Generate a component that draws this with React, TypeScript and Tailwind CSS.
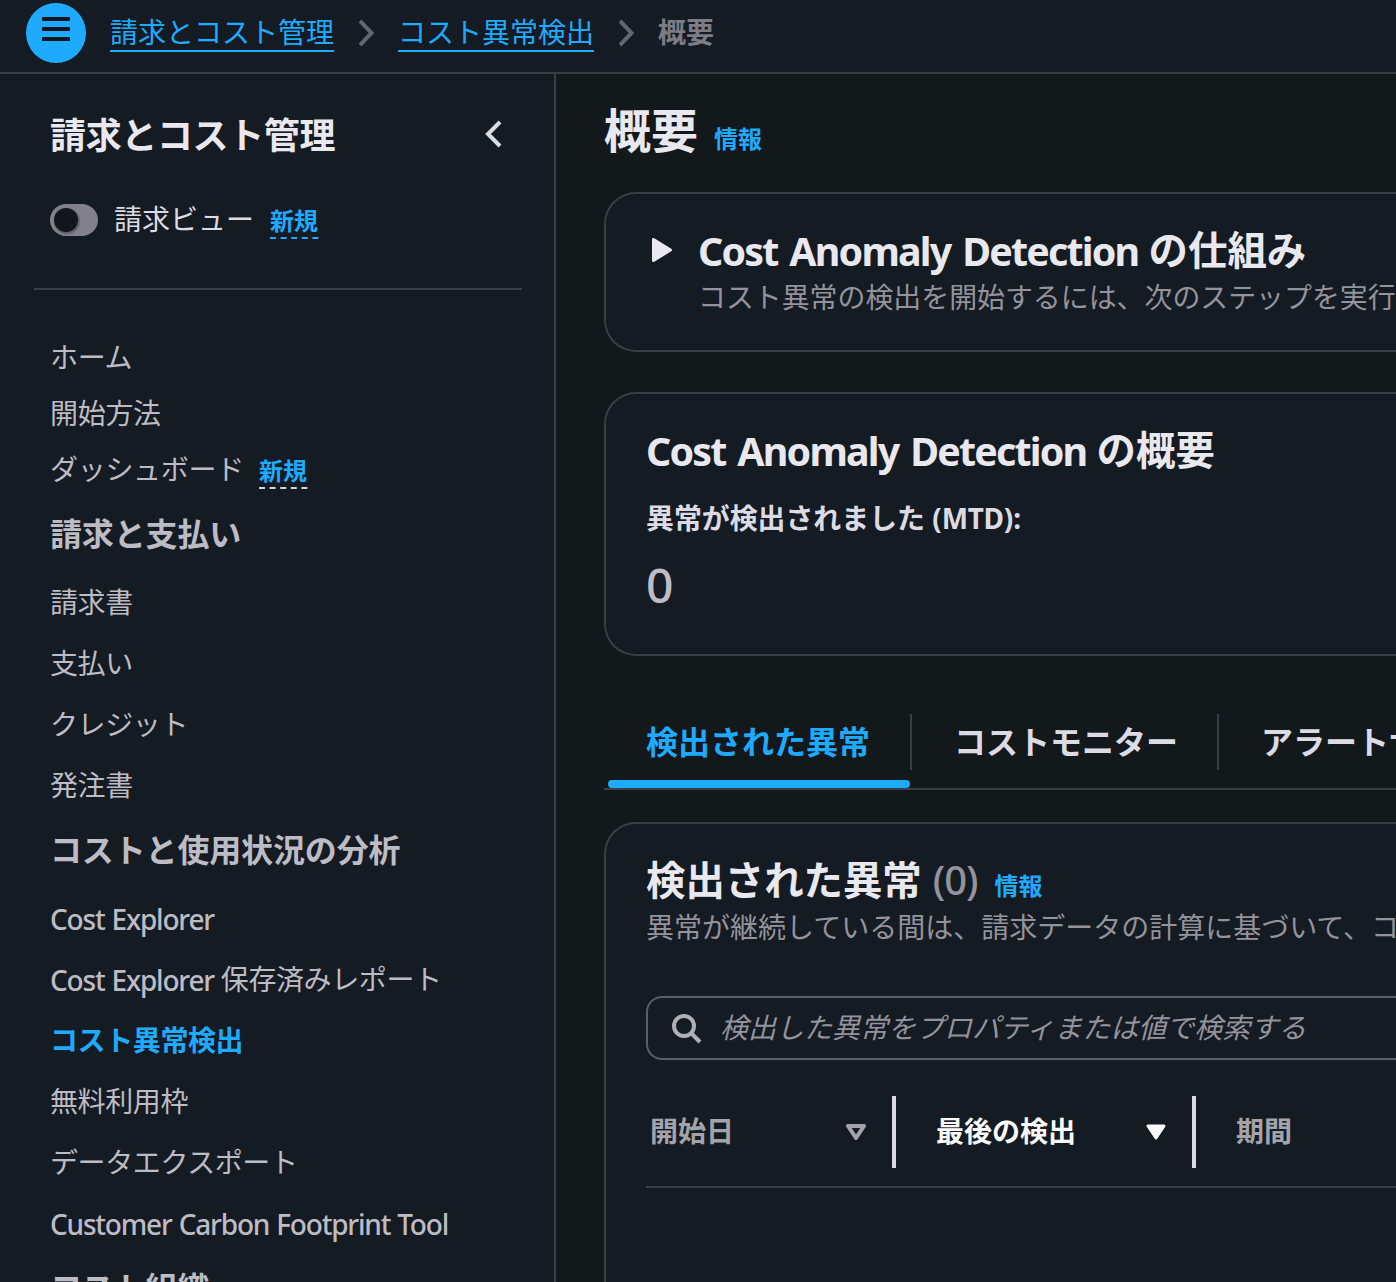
import type { ReactNode } from 'react';

interface NavItem {
  label: string;
  isNew?: boolean;
  active?: boolean;
}

interface NavSection {
  title: string;
  headingClass: string;
  items: NavItem[];
}

const topLinks: NavItem[] = [
  { label: 'ホーム' },
  { label: '開始方法' },
  { label: 'ダッシュボード', isNew: true },
];

const sections: NavSection[] = [
  {
    title: '請求と支払い',
    headingClass: 'h-[75px] pb-0.5',
    items: [{ label: '請求書' }, { label: '支払い' }, { label: 'クレジット' }, { label: '発注書' }],
  },
  {
    title: 'コストと使用状況の分析',
    headingClass: 'h-[72px] pb-1',
    items: [
      { label: 'Cost Explorer' },
      { label: 'Cost Explorer 保存済みレポート' },
      { label: 'コスト異常検出', active: true },
      { label: '無料利用枠' },
      { label: 'データエクスポート' },
      { label: 'Customer Carbon Footprint Tool' },
    ],
  },
  { title: 'コスト組織', headingClass: 'h-[72px] pb-1', items: [] },
];

// Latin runs are set tighter than the Japanese text around them
function Label({ text, latin }: { text: string; latin: string }) {
  return (
    <>
      {text.split(/([A-Za-z][A-Za-z ]*[A-Za-z])/).map((part, i) =>
        i % 2 ? (
          <span key={i} className={latin}>
            {part}
          </span>
        ) : (
          part
        )
      )}
    </>
  );
}

function NewBadge({ lineColor }: { lineColor: string }) {
  return (
    <span className="flex flex-col gap-0.5">
      <span className="text-2xl leading-[28px] font-bold tracking-normal text-[#1eabff]">新規</span>
      <svg className="h-0.5 w-[49px]" viewBox="0 0 49 2">
        <path d="M0 1h48.500" stroke={lineColor} strokeWidth="2" strokeDasharray="6 4.6" />
      </svg>
    </span>
  );
}

function Crumb({ children }: { children: ReactNode }) {
  return (
    <a className="h-[38px] border-b-2 border-[#1eabff] text-[28px] leading-[36px] text-[#1eabff]">{children}</a>
  );
}

function CrumbArrow() {
  return (
    <svg className="mt-[3px] mr-[23px] ml-[25px] h-8 w-4 shrink-0" viewBox="0 0 16 32" fill="none">
      <path d="M1 4l11.500 12L1 28" stroke="#65656e" strokeWidth="4" />
    </svg>
  );
}

function TopBar() {
  return (
    <header className="flex h-[74px] shrink-0 border-b-2 border-[#3a3e46] bg-[#151b23]">
      <button className="mt-[3px] ml-[26px] flex h-[60px] w-[60px] shrink-0 justify-center rounded-full bg-[#1eabff] pt-3.5">
        <svg className="h-6 w-7" viewBox="0 0 28 24">
          <path d="M0 2h28M0 12h28M0 22h28" stroke="#12171f" strokeWidth="4" />
        </svg>
      </button>
      <nav className="mt-3.5 ml-6 flex items-start whitespace-nowrap">
        <Crumb>請求とコスト管理</Crumb>
        <CrumbArrow />
        <Crumb>コスト異常検出</Crumb>
        <CrumbArrow />
        <span className="text-[28px] leading-[36px] font-bold text-[#7c7c86]">概要</span>
      </nav>
    </header>
  );
}

function Sidebar() {
  return (
    <aside className="w-[556px] shrink-0 border-r-2 border-[#3a3e46] bg-[#151b23]">
      <div className="flex items-center justify-between pt-8 pr-[52px] pl-[50px]">
        <h2 className="pt-1 text-[36px] leading-[52px] font-bold tracking-[-0.36px] text-[#e9e8ef]">
          請求とコスト管理
        </h2>
        <svg className="h-7 w-[18px]" viewBox="0 0 18 28" fill="none">
          <path d="M16 2L4 14l12 12" stroke="#dcdbe3" strokeWidth="4" />
        </svg>
      </div>

      <div className="mt-8 flex h-[52px] items-center pl-[50px]">
        <span className="flex h-8 w-12 items-center rounded-full bg-[#82818b] p-1">
          <span className="h-6 w-6 rounded-full bg-[#12161b] shadow-[1px_1px_1px_1px_rgba(0,0,0,0.25)]" />
        </span>
        <span className="mr-4 ml-4 pb-0.5 text-[28px] leading-[40px] text-[#dcdbe3]">請求ビュー</span>
        <span className="pt-[5px]">
          <NewBadge lineColor="#1eabff" />
        </span>
      </div>

      <div className="mt-[42px] mr-8 ml-[34px] border-t-2 border-[#3a3e46]" />

      <ul className="mt-[39px] pl-[50px] text-[28px] tracking-[-0.3px] text-[#bdbcc5]">
        {topLinks.map((item) => (
          <li key={item.label} className="flex h-14 items-center leading-[40px]">
            {item.label}
            {item.isNew && (
              <span className="ml-[15px] pt-2">
                <NewBadge lineColor="#d5d4dc" />
              </span>
            )}
          </li>
        ))}
      </ul>

      {sections.map((section) => (
        <div key={section.title} className="pl-[50px] text-[#bdbcc5]">
          <h3 className={`flex items-center text-[32px] leading-[40px] font-bold tracking-[-0.15px] ${section.headingClass}`}>
            {section.title}
          </h3>
          <ul className="text-[28px] tracking-[-0.4px]">
            {section.items.map((item) => (
              <li
                key={item.label}
                className={
                  item.active
                    ? 'h-[61px] leading-[61px] font-bold text-[#1eabff]'
                    : 'h-[61px] leading-[61px] whitespace-pre'
                }
              >
                <Label text={item.label} latin="relative top-px font-medium tracking-[-1.2px] [word-spacing:1px]" />
              </li>
            ))}
          </ul>
        </div>
      ))}
    </aside>
  );
}

function SortIcon({ filled }: { filled?: boolean }) {
  return (
    <svg className="h-4 w-5" viewBox="0 0 20 16">
      <path
        d="M2 2h16l-8 12z"
        fill={filled ? '#fafafa' : 'none'}
        stroke={filled ? '#fafafa' : '#a4a3aa'}
        strokeWidth={filled ? 3 : 4}
        strokeLinejoin="round"
      />
    </svg>
  );
}

function HowItWorks() {
  return (
    <section className="mt-9 flex h-40 rounded-l-[32px] border-2 border-r-0 border-[#3a3e46] bg-[#151b23] pl-[46px]">
      <svg className="mt-11 h-6 w-5 shrink-0" viewBox="0 0 20 24">
        <path d="M1.500 1.500v21L18.500 12z" fill="#e9e8ef" stroke="#e9e8ef" strokeWidth="3" strokeLinejoin="round" />
      </svg>
      <div className="mt-8 ml-[26px]">
        <h2 className="text-[39.400px] leading-[48px] font-bold text-[#e9e8ef]">
          <Label text="Cost Anomaly Detection の仕組み" latin="relative top-px tracking-[-1.8px] [word-spacing:3.300px]" />
        </h2>
        <p className="text-[27.920px] leading-[46px] text-[#94939b]">
          コスト異常の検出を開始するには、次のステップを実行してください
        </p>
      </div>
    </section>
  );
}

function Summary() {
  return (
    <section className="mt-10 h-[264px] rounded-l-[32px] border-2 border-r-0 border-[#3a3e46] bg-[#151b23] pt-8 pl-10">
      <h2 className="text-[39.400px] leading-[48px] font-bold text-[#e9e8ef]">
        <Label text="Cost Anomaly Detection の概要" latin="relative top-px tracking-[-1.8px] [word-spacing:3.300px]" />
      </h2>
      <div className="mt-6 text-[27.900px] leading-[40px] font-bold text-[#dcdbe3]">
        <Label text="異常が検出されました (MTD):" latin="tracking-[-0.2px]" />
      </div>
      <div className="mt-[17px] text-5xl leading-[60px] font-medium text-[#bdbcc5]">0</div>
    </section>
  );
}

function Tabs() {
  return (
    <div className="mt-[58px] flex h-[76px] border-b-2 border-[#3a3e46] text-[32px] leading-[56px] font-bold text-[#dcdbe3]">
      <div className="flex w-[308px] shrink-0 flex-col">
        <div className="h-14 border-r-2 border-[#3a3e46] pl-[42px] text-[#1eabff]">検出された異常</div>
        <div className="mt-2.5 mr-[2px] ml-1 h-2 rounded bg-[#1eabff]" />
      </div>
      <div className="h-14 w-[307px] shrink-0 border-r-2 border-[#3a3e46] pl-[42px]">コストモニター</div>
      <div className="shrink-0 pl-[42px]">アラートサブスクリプション</div>
    </div>
  );
}

function AnomalyTable() {
  return (
    <section className="mt-8 flex-1 rounded-tl-[32px] border-t-2 border-l-2 border-[#3a3e46] bg-[#151b23] pt-8 pl-10">
      <div className="flex h-12 items-baseline">
        <h2 className="text-[39.400px] leading-[48px] font-bold text-[#e9e8ef]">検出された異常</h2>
        <span className="ml-[11px] text-[40px] leading-[48px] font-medium tracking-[-1px] text-[#94939b]">(0)</span>
        <a className="ml-[17px] text-2xl leading-[30px] font-bold text-[#1eabff]">情報</a>
      </div>
      <p className="text-[28px] leading-[46px] text-[#94939b]">
        異常が継続している間は、請求データの計算に基づいて、コストへの影響が更新されます
      </p>

      <div className="mt-[46px] flex h-16 items-center rounded-l-2xl border-2 border-r-0 border-[#5c5c65] pl-6">
        <svg className="mt-0.5 h-[30px] w-[30px] shrink-0" viewBox="0 0 30 30" fill="none" stroke="#b0afb6" strokeWidth="4">
          <circle cx="12" cy="12" r="10" />
          <path d="M19 19l9 9" />
        </svg>
        <span className="ml-[18px] pb-0.5 text-[28px] text-[#94939b] italic">
          検出した異常をプロパティまたは値で検索する
        </span>
      </div>

      <div className="mt-9 flex h-[92px] items-start border-b-2 border-[#3a3e46] text-[28px] font-bold text-[#a4a3aa]">
        <div className="flex h-[72px] w-[250px] items-center justify-between border-r-4 border-[#dcdbe3] pr-[26px] pl-1">
          <span className="pb-0.5">開始日</span>
          <SortIcon />
        </div>
        <div className="flex h-[72px] w-[300px] items-center justify-between border-r-4 border-[#dcdbe3] pr-[26px] pl-10 text-[#fafafa]">
          <span className="pb-0.5">最後の検出</span>
          <SortIcon filled />
        </div>
        <div className="flex h-[72px] items-center pb-0.5 pl-10">期間</div>
      </div>
    </section>
  );
}

export default function App() {
  return (
    <div
      lang="ja"
      className="flex h-[1282px] w-[1396px] flex-col overflow-hidden bg-[#13181b] font-['Noto_Sans','Noto_Sans_CJK_JP',sans-serif]"
    >
      <TopBar />
      <div className="flex min-h-0 flex-1">
        <Sidebar />
        <main className="flex w-[840px] flex-col overflow-hidden pl-12 whitespace-nowrap">
          <div className="mt-[26px] flex h-14 items-baseline">
            <h1 className="text-[47px] leading-[60px] font-bold text-[#e9e8ef]">概要</h1>
            <a className="ml-4 text-2xl leading-[30px] font-bold text-[#1eabff]">情報</a>
          </div>
          <HowItWorks />
          <Summary />
          <Tabs />
          <AnomalyTable />
        </main>
      </div>
    </div>
  );
}
